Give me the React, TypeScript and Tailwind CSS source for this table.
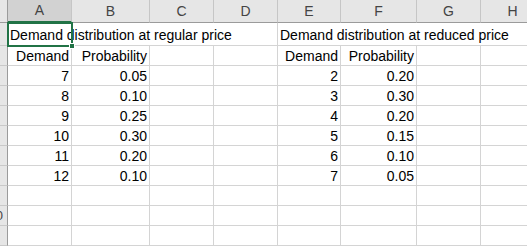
import React from "react";

const cols = ["A", "B", "C", "D", "E", "F", "G", "H"];
const left = [
  ["7", "0.05"],
  ["8", "0.10"],
  ["9", "0.25"],
  ["10", "0.30"],
  ["11", "0.20"],
  ["12", "0.10"],
];
const right = [
  ["2", "0.20"],
  ["3", "0.30"],
  ["4", "0.20"],
  ["5", "0.15"],
  ["6", "0.10"],
  ["7", "0.05"],
];

const cell =
  "border-r border-b border-[#d4d4d4] h-full flex items-end justify-end pr-[2px] pb-[2px] leading-none whitespace-nowrap overflow-visible";

function RowHead({ label }: { label?: string }) {
  return (
    <div className="h-full bg-[#e6e6e6] border-r border-[#9b9b9b] border-b border-b-[#c9c9c9] overflow-hidden flex items-center justify-end pr-[4px] text-[13px] text-[#444]">
      {label}
    </div>
  );
}

export default function App() {
  const rows: { a?: string; b?: string; e?: string; f?: string }[] = [];
  for (let i = 0; i < 6; i++) {
    rows.push({ a: left[i][0], b: left[i][1], e: right[i][0], f: right[i][1] });
  }
  return (
    <div
      className="relative w-[527px] h-[246px] overflow-hidden bg-white text-[14px] text-black"
      style={{ fontFamily: '"Liberation Sans", Arial, sans-serif' }}
    >
      <div className="grid grid-cols-[8px_64px_78px_64px_64px_63px_76px_64px_64px] grid-rows-[23px_23px_repeat(10,20px)]">
        {/* header row */}
        <div className="bg-[#e6e6e6] border-r border-[#9b9b9b] border-b border-b-[#9b9b9b]" />
        {cols.map((c) => (
          <div
            key={c}
            className={
              c === "A"
                ? "bg-[#d2d2d2] border-r border-[#c6c6c6] border-b-2 border-b-[#217346] flex items-center justify-center text-[#444] text-[14px]"
                : "bg-[#e6e6e6] border-r border-[#c6c6c6] border-b border-b-[#9b9b9b] flex items-center justify-center text-[#444] text-[14px]"
            }
          >
            {c}
          </div>
        ))}

        {/* row 1 */}
        <RowHead />
        <div className="col-span-4 border-r border-b border-[#d4d4d4] flex items-end pl-[2px] pb-[3px] leading-none whitespace-nowrap">
          Demand distribution at regular price
        </div>
        <div className="col-span-4 border-b border-[#d4d4d4] flex items-end pl-[2px] pb-[3px] leading-none whitespace-nowrap">
          Demand distribution at reduced price
        </div>

        {/* row 2 */}
        <RowHead />
        <div className={cell}>Demand</div>
        <div className={cell}>Probability</div>
        <div className={cell} />
        <div className={cell} />
        <div className={cell}>Demand</div>
        <div className={cell}>Probability</div>
        <div className={cell} />
        <div className={cell} />

        {rows.map((r, i) => (
          <React.Fragment key={i}>
            <RowHead />
            <div className={cell}>{r.a}</div>
            <div className={cell}>{r.b}</div>
            <div className={cell} />
            <div className={cell} />
            <div className={cell}>{r.e}</div>
            <div className={cell}>{r.f}</div>
            <div className={cell} />
            <div className={cell} />
          </React.Fragment>
        ))}

        {["", "10", ""].map((n, k) => (
          <React.Fragment key={k}>
            <RowHead label={n} />
            <div className={cell} />
            <div className={cell} />
            <div className={cell} />
            <div className={cell} />
            <div className={cell} />
            <div className={cell} />
            <div className={cell} />
            <div className={cell} />
          </React.Fragment>
        ))}
      </div>

      {/* selection box */}
      <div className="absolute left-[7px] top-[22px] w-[66px] h-[25px] border-2 border-[#217346] pointer-events-none" />
      <div className="absolute left-[69px] top-[43px] w-[6px] h-[6px] bg-[#217346] border border-white" />
    </div>
  );
}
